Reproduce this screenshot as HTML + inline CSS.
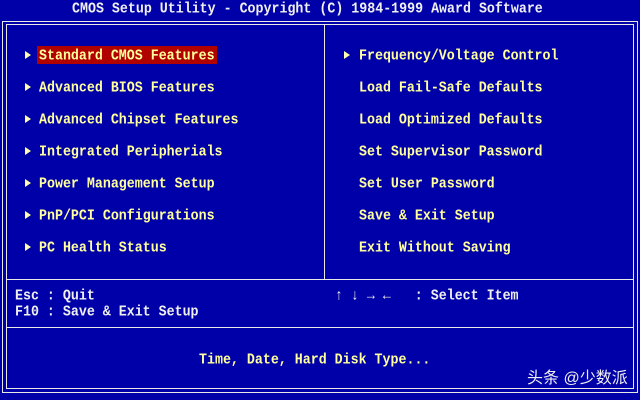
<!DOCTYPE html>
<html><head><style>
body{margin:0;width:640px;height:400px;background:#0000a8;overflow:hidden;position:relative;font-family:"Liberation Mono",monospace;font-weight:bold;font-size:13.3px;}
.t{position:absolute;white-space:pre;line-height:16px;color:#ffff9c;transform:scaleY(1.12);transform-origin:0 50%;}
.w{color:#f0f0f0;}
.l{position:absolute;background:#e8e8e8;}
.a{position:absolute;width:0;height:0;border-top:4px solid transparent;border-bottom:4px solid transparent;border-left:6px solid #ffffb0;}
</style></head><body>
<div class="t w" style="left:72px;top:1px">CMOS Setup Utility - Copyright (C) 1984-1999 Award Software</div>
<div class="l" style="left:2px;top:21px;width:636px;height:1px"></div>
<div class="l" style="left:6px;top:24px;width:628px;height:1px"></div>
<div class="l" style="left:2px;top:392px;width:636px;height:1px"></div>
<div class="l" style="left:6px;top:388px;width:628px;height:1px"></div>
<div class="l" style="left:2px;top:21px;width:1px;height:372px"></div>
<div class="l" style="left:6px;top:24px;width:1px;height:365px"></div>
<div class="l" style="left:637px;top:21px;width:1px;height:372px"></div>
<div class="l" style="left:633px;top:24px;width:1px;height:365px"></div>
<div class="l" style="left:324px;top:24px;width:1px;height:255px"></div>
<div class="l" style="left:6px;top:279px;width:628px;height:1px"></div>
<div class="l" style="left:6px;top:327px;width:628px;height:1px"></div>
<div style="position:absolute;left:37px;top:46px;width:180px;height:18px;background:#b00000"></div>
<div class="a" style="left:25px;top:51px"></div>
<div class="a" style="left:25px;top:83px"></div>
<div class="a" style="left:25px;top:115px"></div>
<div class="a" style="left:25px;top:147px"></div>
<div class="a" style="left:25px;top:179px"></div>
<div class="a" style="left:25px;top:211px"></div>
<div class="a" style="left:25px;top:243px"></div>
<div class="a" style="left:344px;top:51px"></div>
<div class="t" style="left:39px;top:48px">Standard CMOS Features</div>
<div class="t" style="left:39px;top:80px">Advanced BIOS Features</div>
<div class="t" style="left:39px;top:112px">Advanced Chipset Features</div>
<div class="t" style="left:39px;top:144px">Integrated Peripherials</div>
<div class="t" style="left:39px;top:176px">Power Management Setup</div>
<div class="t" style="left:39px;top:208px">PnP/PCI Configurations</div>
<div class="t" style="left:39px;top:240px">PC Health Status</div>
<div class="t" style="left:359px;top:48px">Frequency/Voltage Control</div>
<div class="t" style="left:359px;top:80px">Load Fail-Safe Defaults</div>
<div class="t" style="left:359px;top:112px">Load Optimized Defaults</div>
<div class="t" style="left:359px;top:144px">Set Supervisor Password</div>
<div class="t" style="left:359px;top:176px">Set User Password</div>
<div class="t" style="left:359px;top:208px">Save &amp; Exit Setup</div>
<div class="t" style="left:359px;top:240px">Exit Without Saving</div>
<div class="t w" style="left:15px;top:288px">Esc : Quit</div>
<div class="t w" style="left:15px;top:304px">F10 : Save &amp; Exit Setup</div>
<div class="t w" style="left:335px;top:288px">↑ ↓ → ←   : Select Item</div>
<div class="t" style="left:199px;top:352px">Time, Date, Hard Disk Type...</div>
<div class="t w" style="left:527px;top:370px;font-family:'Liberation Sans','Noto Sans CJK SC',sans-serif;font-size:16px;font-weight:normal;line-height:18px;transform:none">头条 @少数派</div>
</body></html>
